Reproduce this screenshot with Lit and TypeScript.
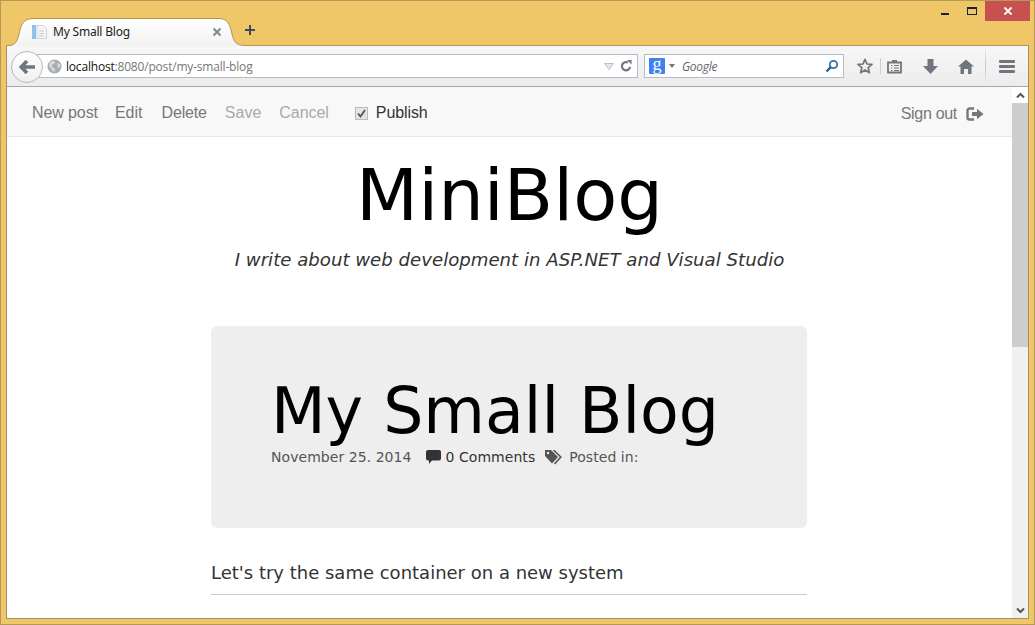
import { LitElement, html, css } from "lit";
import { customElement } from "lit/decorators.js";

@customElement("app-root")
export class AppRoot extends LitElement {
  static styles = css`
    :host { display: block; width: 1035px; height: 625px; overflow: hidden; }
    * { box-sizing: border-box; }
    svg { display: block; flex: none; }
    .window {
      width: 1035px; height: 625px; background: #efc768; border: 1px solid #b49a52;
      padding: 0 5px 5px; display: flex; flex-direction: column;
      font-family: "Liberation Sans", Arial, sans-serif;
    }
    .top { height: 44px; display: flex; flex: none; position: relative; }
    .tab {
      width: 239px; height: 29px; margin: 16px 0 0 1px; position: relative; z-index: 1;
      display: flex; align-items: center; padding: 0 0 0 25px;
      font-size: 12px; color: #222;
    }
    .tab-bg { position: absolute; left: 0; top: 0; }
    .tab > *:not(.tab-bg) { position: relative; }
    .tab-title { margin-left: 6px; width: 159px; font-family: "Noto Sans", sans-serif; letter-spacing: -0.2px; }
    .plus { margin: 23px 0 0 -2px; }
    .spacer { flex: 1; }
    .controls { display: flex; height: 20px; align-items: flex-start; }
    .ctl-min { width: 8px; height: 2px; background: #1a2230; margin: 12px 18px 0 0; }
    .ctl-max { width: 10px; height: 8px; border: 1px solid #1a2230; border-top-width: 2px; margin: 6px 8px 0 0; }
    .ctl-close { width: 45px; height: 20px; background: #c75050; display: flex; align-items: center; justify-content: center; margin-right: -1px; }
    .frame {
      flex: 1; min-height: 0; border: 1px solid #a8915a; border-top-color: #b0964f; display: flex; flex-direction: column; background: #fff;
    }
    .toolbar {
      height: 41px; flex: none; border-bottom: 1px solid #a9a9a9;
      background: linear-gradient(#f7f7f7, #ececec);
      display: flex; align-items: center; padding: 0 0 0 4px;
    }
    .back {
      width: 32px; height: 32px; border-radius: 50%; background: linear-gradient(#fff, #f0f0f0);
      border: 1px solid #b9b9b9; display: flex; align-items: center; justify-content: center;
      position: relative; z-index: 1; flex: none; margin-top: 1px;
    }
    .url {
      width: 608px; height: 24px; margin-left: -13px; background: #fff; border: 1px solid #b5bcc5;
      display: flex; align-items: center; padding: 0 5px 0 16px; font-size: 12px; font-family: "Open Sans", sans-serif; letter-spacing: -0.19px;
    }
    .host { color: #111; margin-left: 4px; }
    .path { color: #777; flex: 1; }
    .search {
      width: 200px; height: 24px; margin-left: 6px; background: #fff; border: 1px solid #b5bcc5;
      display: flex; align-items: center; padding: 0 4px;
    }
    .g {
      width: 16px; height: 16px; background: #3e82f1; border-radius: 1px; color: #fff; font: 400 18px/13px "Liberation Serif", serif;
      text-align: center;
    }
    .gtext { flex: 1; margin-left: 7px; font: italic 12px "Open Sans", sans-serif; color: #666; letter-spacing: -0.3px; }
    .tools { display: flex; align-items: center; margin-left: 13px; }
    .divider { width: 1px; height: 16px; background: #cfcfcf; margin: 0 6px 0 7px; }
    .sep { width: 1px; height: 36px; background: linear-gradient(#ececec, #c4c4c4, #ececec); margin: 0 13px 0 11px; }
    .ml-dl { margin-left: 21px; }
    .ml-home { margin-left: 20px; }
    .body { flex: 1; min-height: 0; display: flex; }
    .page { flex: 1; min-width: 0; overflow: hidden; background: #fff; }
    .nav {
      height: 50px; background: #f8f8f8; border-bottom: 1px solid #e7e7e7; display: flex; align-items: center;
      padding: 3px 28px 0 25px; font-size: 16px; color: #777;
    }
    .nav a { margin-right: 16px; }
    .nav .dis { color: #aaa; }
    .new { letter-spacing: -0.1px; margin-right: 17px !important; }
    .del { margin-left: 3px; letter-spacing: -0.15px; }
    .save { margin-left: 2px; }
    .cancel { margin-left: 2px; letter-spacing: -0.05px; }
    .check { display: flex; align-items: center; margin-left: 10px; color: #333; letter-spacing: -0.1px; }
    .box {
      width: 13px; height: 13px; background: #e4e4e4; border: 1px solid #bbb; margin-right: 8px;
      display: flex; align-items: center; justify-content: center;
    }
    .signout { margin-left: auto; display: flex; align-items: center; gap: 9px; padding-top: 1px; letter-spacing: -0.3px; }
    .head { text-align: center; font-family: "DejaVu Sans", sans-serif; }
    .head h1 { margin: 0; font-size: 72px; font-weight: 400; line-height: 86px; padding-top: 15px; color: #000; }
    .head p { margin: 0; font-size: 18.15px; font-style: italic; color: #333; line-height: 26px; padding-top: 9px; }
    .main { width: 596px; margin: 53px 0 0 204px; font-family: "DejaVu Sans", sans-serif; }
    .card { height: 202px; background: #eee; border-radius: 6px; padding: 47px 60px 0; }
    .card h2 { margin: 0; font-size: 63.3px; font-weight: 400; line-height: 76px; color: #000; white-space: nowrap; }
    .meta { display: flex; align-items: center; font-size: 14px; letter-spacing: 0.05px; color: #555; line-height: 20px; margin-top: -2px; }
    .comments { color: #333; margin: 0 10px 0 4px; }
    .ci { margin-left: 15px; }
    .ti { margin-right: 7px; }
    .lead { margin: 33px 0 0; font-size: 18px; line-height: 24px; color: #333; padding-bottom: 9px; border-bottom: 1px solid #ccc; }
    .scroll { width: 16px; flex: none; background: #f0f0f0; display: flex; flex-direction: column; align-items: stretch; }
    .arrow { height: 16px; display: flex; align-items: center; justify-content: center; background: #fff; }
    .arrow.down { background: #f0f0f0; margin-top: auto; }
    .thumb { height: 244px; background: #cdcdcd; }
  `;

  render() {
    return html`
      <div class="window">
        <div class="top">
          <div class="tab">
            <svg class="tab-bg" width="239" height="29" viewBox="0 0 239 29">
              <defs><linearGradient id="tg" x1="0" y1="0" x2="0" y2="1"><stop offset="0" stop-color="#fff"/><stop offset="1" stop-color="#f2f2f2"/></linearGradient></defs>
              <path d="M0 29 C7 29 10 26 12 17 C14 8 16 1.500 26 1.500 L212 1.500 C221 1.500 223 8 225 17 C227 26 230 28.500 239 28.500 L239 29 Z" fill="url(#tg)"/>
              <path d="M0 28.500 C7 28.500 10 26 12 17 C14 8 16 1.500 26 1.500 L212 1.500 C221 1.500 223 8 225 17 C227 26 230 28.500 239 28.500" fill="none" stroke="#b0964f"/>
            </svg>
            <svg width="15" height="14" viewBox="0 0 15 14">
              <rect x="0" y="0" width="4" height="14" fill="#8fc0e8"/>
              <path d="M5 .5 H11 L14.500 4 V13.500 H5 Z" fill="#f4f6f8" stroke="#c9d3dc"/>
              <path d="M7 6 H12 M7 8.500 H12 M7 11 H12" stroke="#c3ccd4"/>
            </svg>
            <span class="tab-title">My Small Blog</span>
            <svg width="10" height="10" viewBox="0 0 10 10"><path d="M1.500 1.500 L8.500 8.500 M8.500 1.500 L1.500 8.500" stroke="#7c8690" stroke-width="2"/></svg>
          </div>
          <svg class="plus" width="12" height="12" viewBox="0 0 12 12"><path d="M6 1 V11 M1 6 H11" stroke="#3c4a5c" stroke-width="2"/></svg>
          <div class="spacer"></div>
          <div class="controls">
            <div class="ctl-min"></div>
            <div class="ctl-max"></div>
            <div class="ctl-close"><svg width="10" height="10" viewBox="0 0 10 10"><path d="M1.500 1.500 L8.500 8.500 M8.500 1.500 L1.500 8.500" stroke="#fff" stroke-width="1.800"/></svg></div>
          </div>
        </div>
        <div class="frame">
          <div class="toolbar">
            <div class="back">
              <svg width="16" height="14" viewBox="0 0 16 14"><path d="M8 1 L2.200 7 L8 13 M3 7 H16" fill="none" stroke="#6f767e" stroke-width="3.600"/></svg>
            </div>
            <div class="url">
              <svg width="15" height="15" viewBox="0 0 15 15">
                <circle cx="7.500" cy="7.500" r="7" fill="#a9adb1"/>
                <path d="M3 3 C5 1.500 8 2 8 3.500 C8 5 5 5 5 7 C5 9 8 8.500 8 11 C8 13 6 13 5 11 C4 9 2 8 2 6 Z M10 4 L13 5 L13.500 8 L11 9 Z" fill="#d7d9db"/>
              </svg>
              <span class="host">localhost</span><span class="path">:8080/post/my-small-blog</span>
              <svg width="10" height="7" viewBox="0 0 10 7"><path d="M.5 .5 H9.500 L5 6.500 Z" fill="#e6e9ec" stroke="#b9c0c7"/></svg>
              <svg style="margin-left:6px" width="12" height="12" viewBox="0 0 13 13"><path d="M11 7.500 A4.500 4.500 0 1 1 8.800 2.800" fill="none" stroke="#6f7a84" stroke-width="2.400"/><path d="M7.500 0 L12.500 0 L12.500 5 Z" fill="#6f7a84"/></svg>
            </div>
            <div class="search">
              <div class="g">g</div>
              <svg style="margin-left:4px" width="6" height="4" viewBox="0 0 6 4"><path d="M0 0 H6 L3 4 Z" fill="#777"/></svg>
              <span class="gtext">Google</span>
              <svg width="14" height="14" viewBox="0 0 14 14"><circle cx="8.500" cy="5.500" r="3.700" fill="none" stroke="#2f72ad" stroke-width="1.800"/><path d="M5.800 8.200 L1.500 12.500" stroke="#2a5f92" stroke-width="2.400"/></svg>
            </div>
            <div class="tools">
              <svg width="16" height="16" viewBox="0 0 16 16"><path d="M8 1.300 L10 6 L15 6.400 L11.200 9.700 L12.400 14.700 L8 12 L3.600 14.700 L4.800 9.700 L1 6.400 L6 6 Z" fill="none" stroke="#6f767e" stroke-width="1.700" stroke-linejoin="round"/></svg>
              <div class="divider"></div>
              <svg width="15" height="15" viewBox="0 0 15 15"><path d="M1 3.500 H14 V13.500 H1 Z" fill="none" stroke="#6f767e" stroke-width="1.800"/><path d="M5 1 H10 V3 H5 Z" fill="#6f767e"/><path d="M4 6.500 H5.500 M7 6.500 H12 M4 9 H5.500 M7 9 H12 M4 11.500 H5.500 M7 11.500 H12" stroke="#6f767e" stroke-width="1.200"/></svg>
              <svg class="ml-dl" width="15" height="15" viewBox="0 0 15 15"><path d="M4.500 0 H10.500 V7 H15 L7.500 15 L0 7 H4.500 Z" fill="#6f767e"/></svg>
              <svg class="ml-home" width="16" height="15" viewBox="0 0 16 15"><path d="M8 .5 L16 7.500 H13.500 V15 H10 V10 H6 V15 H2.500 V7.500 H0 Z" fill="#6f767e"/></svg>
              <div class="sep"></div>
              <svg width="16" height="13" viewBox="0 0 16 13"><rect y="0" width="16" height="3" rx="1" fill="#6f767e"/><rect y="5" width="16" height="3" rx="1" fill="#6f767e"/><rect y="10" width="16" height="3" rx="1" fill="#6f767e"/></svg>
            </div>
          </div>
          <div class="body">
            <div class="page">
              <div class="nav">
                <a class="new">New post</a><a>Edit</a><a class="del">Delete</a><a class="dis save">Save</a><a class="dis cancel">Cancel</a>
                <label class="check">
                  <span class="box"><svg width="9" height="9" viewBox="0 0 9 9"><path d="M1 4.500 L3.500 7.500 L8 1" fill="none" stroke="#555" stroke-width="1.800"/></svg></span>
                  Publish
                </label>
                <div class="signout">
                  Sign out
                  <svg width="18" height="14" viewBox="0 0 18 14"><path d="M8 1.500 H3.500 A2 2 0 0 0 1.500 3.500 V10.500 A2 2 0 0 0 3.500 12.500 H8" fill="none" stroke="#777" stroke-width="2.400"/><path d="M6 5 H11 V1.800 L17.500 7 L11 12.200 V9 H6 Z" fill="#777"/></svg>
                </div>
              </div>
              <div class="head">
                <h1>MiniBlog</h1>
                <p>I write about web development in ASP.NET and Visual Studio</p>
              </div>
              <div class="main">
                <div class="card">
                  <h2>My Small Blog</h2>
                  <div class="meta">
                    <span>November 25. 2014</span>
                    <svg class="ci" width="15" height="14" viewBox="0 0 15 14"><path d="M2 0 H13 A2 2 0 0 1 15 2 V8.500 A2 2 0 0 1 13 10.500 H6 L3 14 V10.500 H2 A2 2 0 0 1 0 8.500 V2 A2 2 0 0 1 2 0 Z" fill="#333"/></svg>
                    <span class="comments">0 Comments</span>
                    <svg class="ti" width="17" height="15" viewBox="0 0 17 15"><path d="M0 0 H6 L13 7 L7 13.500 L0 6 Z" fill="#555"/><circle cx="3" cy="3" r="1.200" fill="#eee"/><path d="M8.500 0 L15.800 7 L9.500 14" fill="none" stroke="#555" stroke-width="1.600"/></svg>
                    <span>Posted in:</span>
                  </div>
                </div>
                <p class="lead">Let's try the same container on a new system</p>
              </div>
            </div>
            <div class="scroll">
              <div class="arrow"><svg width="9" height="7" viewBox="0 0 9 7"><path d="M1 5.500 L4.500 2 L8 5.500" fill="none" stroke="#555" stroke-width="2"/></svg></div>
              <div class="thumb"></div>
              <div class="arrow down"><svg width="9" height="7" viewBox="0 0 9 7"><path d="M1 1.500 L4.500 5 L8 1.500" fill="none" stroke="#555" stroke-width="2"/></svg></div>
            </div>
          </div>
        </div>
      </div>
    `;
  }
}
